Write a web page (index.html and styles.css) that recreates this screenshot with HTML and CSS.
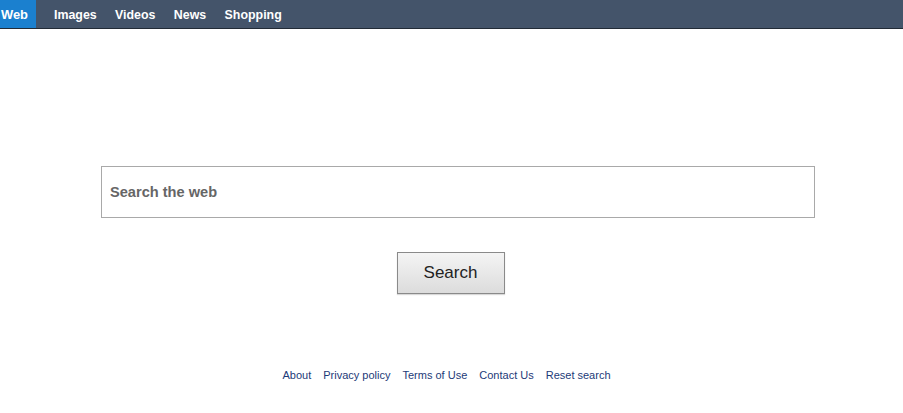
FILE: index.html
```html
<!DOCTYPE html>
<html>
<head>
<meta charset="utf-8">
<link rel="stylesheet" href="styles.css">
</head>
<body>
<nav class="topbar">
  <a class="tab active">Web</a>
  <a class="tab">Images</a>
  <a class="tab">Videos</a>
  <a class="tab">News</a>
  <a class="tab">Shopping</a>
</nav>
<main class="main">
  <div class="search-wrap">
    <input class="search-input" type="text" placeholder="Search the web">
  </div>
  <div class="btn-row">
    <button class="search-btn">Search</button>
  </div>
  <footer class="footer">
    <a>About</a>
    <a>Privacy policy</a>
    <a>Terms of Use</a>
    <a>Contact Us</a>
    <a>Reset search</a>
  </footer>
</main>
</body>
</html>
```

FILE: styles.css
```css
html, body {
  margin: 0;
  padding: 0;
  background: #ffffff;
  font-family: "Liberation Sans", Arial, sans-serif;
}
.topbar {
  display: flex;
  height: 28px;
  background: #44546a;
  border-bottom: 1px solid #222b36;
}
.tab {
  display: flex;
  align-items: center;
  padding: 1px 9.2px 0;
  color: #ffffff;
  font-weight: bold;
  font-size: 12.4px;
}
.tab.active {
  background: #1b80cf;
  width: 35px;
  padding: 1px 0 0 1px;
  font-size: 12.9px;
}
.tab.active + .tab {
  margin-left: 8.8px;
}
.main {
  display: flex;
  flex-direction: column;
}
.search-wrap {
  margin: 137px 88px 0 101px;
}
.search-input {
  display: block;
  box-sizing: border-box;
  width: 100%;
  height: 52px;
  border: 1px solid #a9a9a9;
  padding: 0 8px;
  font-family: "Liberation Sans", Arial, sans-serif;
  font-size: 14.6px;
  font-weight: bold;
  color: #333;
  outline: none;
}
.search-input::placeholder {
  color: #666666;
  opacity: 1;
}
.btn-row {
  display: flex;
  justify-content: center;
  margin-top: 34px;
  padding-right: 2px;
}
.search-btn {
  width: 108px;
  height: 42px;
  border: 1px solid #8a8a8a;
  background: linear-gradient(#f4f4f4, #dcdcdc);
  box-shadow: 0 1px 1px rgba(0,0,0,0.15);
  font-family: "Liberation Sans", Arial, sans-serif;
  font-size: 17px;
  color: #222;
  padding: 0;
}
.footer {
  display: flex;
  justify-content: center;
  gap: 12px;
  margin-top: 75px;
  padding-right: 10px;
  font-size: 11px;
}
.footer a {
  color: #1d3a78;
}
```
